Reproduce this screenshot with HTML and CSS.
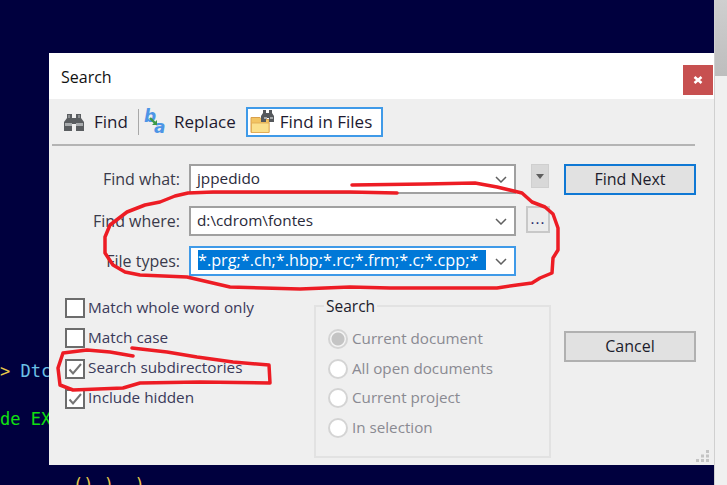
FILE: index.html
```html
<!DOCTYPE html>
<html lang="en">
<head>
<meta charset="utf-8">
<title>Search</title>
<link rel="stylesheet" href="styles.css">
</head>
<body>
<div class="desktop">
  <div class="code code-a"><span class="yl">&gt;</span> <span class="bl">Dtc</span></div>
  <div class="code code-b"><span class="gr">de EX</span></div>
  <div class="code code-c"><span class="yl">() )  )</span></div>
  <div class="scrollbar"><div class="thumb"></div></div>

  <section class="dialog">
    <header class="titlebar">
      <h1 class="title">Search</h1>
      <button class="close" aria-label="Close">
        <svg width="10" height="8" viewBox="0 0 10 8"><path d="M1.500 1 8.500 7M8.500 1 1.500 7" fill="none" stroke="#fff" stroke-width="2.600"/></svg>
      </button>
    </header>

    <nav class="toolbar">
      <div class="tool tool-find">
        <svg width="22" height="22" viewBox="0 0 22 22"><path d="M4 3h5v4h4V3h5v4l3 4v9h-8v-7H9v7H1v-9l3-4z" fill="#5a5d60"/><path d="M2 12h7v3H2zM13 12h7v3h-7z" fill="#a9acae"/><path d="M5 4h2v3H5zM15 4h2v3h-2z" fill="#8c8f91"/></svg>
        <span>Find</span>
      </div>
      <div class="sep"></div>
      <div class="tool tool-replace">
        <svg class="ico-rep" width="26" height="26" viewBox="0 0 26 26"><text x="1" y="13" class="ico-b">b</text><text x="11" y="24" class="ico-a">a</text><path d="M7 9l6 6" stroke="#3d9a46" stroke-width="2.400" fill="none"/><path d="M14 11v5H9z" fill="#3d9a46"/></svg>
        <span>Replace</span>
      </div>
      <div class="tool tool-files">
        <svg width="26" height="26" viewBox="0 0 26 26"><path d="M1 8.500h9l2 2h7v13H1z" fill="#f2c462" stroke="#d9a04c"/><path d="M1.500 14h17.500v9.500H1.500z" fill="#fbe08c" stroke="#dfa850" stroke-width=".8"/><path d="M13 1h3v3h3V1h3v3l2 3v6h-5V9h-3v4h-5V7l2-3z" fill="#55585c"/><path d="M14 8h3v2h-3zM20 8h3v2h-3z" fill="#a5a8aa"/></svg>
        <span>Find in Files</span>
      </div>
    </nav>

    <div class="content">
      <div class="fields">
        <label class="lbl"><span class="up">Find what:</span></label>
        <div class="combo"><span class="val up">jppedido</span><svg class="chev" width="12" height="7" viewBox="0 0 12 7"><path d="M1 1l5 5 5-5" fill="none" stroke="#606060" stroke-width="1.500"/></svg></div>
        <div class="extra"><div class="mini"><svg width="8" height="5" viewBox="0 0 8 5"><path d="M0 0h8L4 5z" fill="#5e5e5e"/></svg></div></div>
        <button class="btn btn-default"><span class="up-s">Find Next</span></button>

        <label class="lbl"><span class="up">Find where:</span></label>
        <div class="combo"><span class="val up">d:\cdrom\fontes</span><svg class="chev" width="12" height="7" viewBox="0 0 12 7"><path d="M1 1l5 5 5-5" fill="none" stroke="#606060" stroke-width="1.500"/></svg></div>
        <div class="extra"><div class="dots">...</div></div>
        <div></div>

        <label class="lbl"><span class="up">File types:</span></label>
        <div class="combo combo-focus"><span class="val-sel">*.prg;*.ch;*.hbp;*.rc;*.frm;*.c;*.cpp;*</span><svg class="chev" width="12" height="7" viewBox="0 0 12 7"><path d="M1 1l5 5 5-5" fill="none" stroke="#606060" stroke-width="1.500"/></svg></div>
      </div>

      <div class="lower">
        <div class="checks">
          <div class="check"><span class="box"></span><span class="up">Match whole word only</span></div>
          <div class="check"><span class="box"></span><span class="up">Match case</span></div>
          <div class="check"><span class="box"><svg width="16" height="16" viewBox="0 0 16 16"><path d="M2.500 8.500l3.500 4 8-9.500" fill="none" stroke="#757575" stroke-width="2"/></svg></span><span class="up">Search subdirectories</span></div>
          <div class="check"><span class="box"><svg width="16" height="16" viewBox="0 0 16 16"><path d="M2.500 8.500l3.500 4 8-9.500" fill="none" stroke="#757575" stroke-width="2"/></svg></span><span class="up">Include hidden</span></div>
        </div>
        <fieldset class="group">
          <legend class="legend">Search</legend>
          <div class="radio"><span class="dot dot-on"></span><span class="up-s">Current document</span></div>
          <div class="radio"><span class="dot"></span><span class="up-s">All open documents</span></div>
          <div class="radio"><span class="dot"></span><span class="up-s">Current project</span></div>
          <div class="radio"><span class="dot"></span><span class="up-s">In selection</span></div>
        </fieldset>
        <button class="btn btn-cancel"><span class="up-s">Cancel</span></button>
      </div>
    </div>

    <svg class="grip" width="14" height="14" viewBox="0 0 14 14"><path d="M10 1h3v3h-3zM5 5.500h3v3H5zM10 5.500h3v3h-3zM0 10h3v3H0zM5 10h3v3H5zM10 10h3v3h-3z" fill="#c4c4c4"/></svg>
  </section>

  <svg class="ink" width="727" height="485" viewBox="0 0 727 485">
    <path d="M352 185 425 184 475 183 497 187 522 193 532 202 545 207 553 214 558 228 558 250 553 258 552 273 540 278 532 283 517 285 497 288 390 288 350 287 300 289 230 287 187 277 140 275 125 272 113 265 105 253 105 237 110 225 127 212 145 205 160 202 175 196 188 193 213 192 350 192 397 193" />
    <path d="M133 356 110 352 87 350 63 353 58 368 60 385 73 390 123 388 140 383 200 382 270 383 269 365 233 362 197 357 167 352 132 348" />
  </svg>
</div>
</body>
</html>
```
FILE: styles.css
```css
* { box-sizing: border-box; }
html, body { margin: 0; padding: 0; }
body { font-family: "Open Sans", "Noto Sans", sans-serif; font-size: 16px; color: #1c1c2c; overflow: hidden; }
.desktop { position: relative; width: 727px; height: 485px; background: #00003e; overflow: hidden; }

.code { position: absolute; font-family: "DejaVu Sans Mono", monospace; font-size: 17px; line-height: 20px; white-space: pre; }
.code-a { left: 0; top: 361px; }
.code-b { left: 0; top: 409px; }
.code-c { left: 73px; top: 475px; }
.yl { color: #e6c84a; }
.bl { color: #6cc0e6; }
.gr { color: #10e010; }

.scrollbar { position: absolute; right: 0; top: 0; width: 13px; height: 485px; background: #f0f0f0; border-left: 1px solid #d0d0d0; }
.thumb { height: 76px; background: linear-gradient(#cfcfcf, #bdbdbd); }

.dialog { position: absolute; left: 49px; top: 53px; width: 665px; height: 412px; background: #efefef; display: flex; flex-direction: column; }
.titlebar { height: 46px; background: #fff; display: flex; justify-content: space-between; align-items: flex-start; flex: none; }
.title { margin: 12px 0 0 12px; font-size: 16px; font-weight: 400; line-height: 24px; color: #111; }
.close { margin: 12px 1px 0 0; width: 30px; height: 30px; border: 0; padding: 0; background: #c75050; display: flex; align-items: center; justify-content: center; }

.toolbar { height: 47px; flex: none; margin: 0 19px 0 3px; padding: 8px 0 0 11px; border-bottom: 2px solid #b4b4b4; display: flex; align-items: flex-start; font-size: 17px; color: #1e1a30; }
.tool { display: flex; align-items: center; height: 30px; }
.tool span { padding-bottom: 2px; }
.tool-find { gap: 9px; }
.tool-find span { margin-right: 10px; }
.sep { width: 1px; height: 26px; background: #a8a8a8; margin-top: 2px; }
.tool-replace { margin-left: 4px; gap: 5px; }
.tool-replace span { margin-right: 10px; }
.tool-files { width: 137px; flex: none; border: 2px solid #3f9ae8; background: #fff; padding-left: 2px; gap: 4px; }
.ico-rep { overflow: visible; }
.ico-b, .ico-a { font-family: "DejaVu Sans", sans-serif; font-weight: 700; font-style: italic; font-size: 17px; fill: #4d95e6; }

.content { padding: 18px 0 0 16px; display: flex; flex-direction: column; }
.fields { display: grid; grid-template-columns: 124px 327px 48px 132px; grid-template-rows: 42px 40px 30px; }
.lbl { width: 116px; padding-right: 1px; text-align: right; height: 30px; line-height: 30px; color: #3a3a4a; white-space: nowrap; }
.up { display: inline-block; line-height: 20px; padding-bottom: 3px; }
.up-s { display: inline-block; line-height: 20px; padding-bottom: 2px; }
.combo { width: 327px; height: 30px; border: 2px solid #a0a0a0; background: #fff; display: flex; align-items: center; justify-content: space-between; padding: 0 7px 0 6px; grid-column: 2; }
.val { white-space: nowrap; color: #2a2a3a; font-size: 15.300px; }
.combo-focus { border-color: #3f9ae8; padding-left: 7px; }
.val-sel { background: #0078d7; color: #fff; font-size: 16.200px; line-height: 20px; height: 20px; width: 288px; overflow: hidden; white-space: nowrap; display: block; margin-bottom: 3px; }
.chev { flex: none; }
.mini { width: 18px; height: 24px; margin-left: 15px; background: #d8d8d8; border: 1px solid #cfcfcf; display: flex; align-items: center; justify-content: center; }
.dots { width: 24px; height: 27px; margin-left: 10px; background: #ececec; border: 2px solid #c8c8c8; text-align: center; line-height: 21px; font-size: 15px; letter-spacing: 1px; color: #222266; }
.btn { font: inherit; color: #1c1c2c; width: 132px; height: 31px; background: #e1e1e1; padding: 0; }
.btn-default { border: 2px solid #0f78d4; }
.btn-cancel { border: 2px solid #b0b0b0; margin: 33px 0 0 13px; }

.lower { display: flex; align-items: flex-start; margin-top: 22px; }
.checks { width: 249px; display: flex; flex-direction: column; gap: 10.300px; }
.check { display: flex; align-items: center; height: 20px; gap: 3px; color: #3a3a5a; white-space: nowrap; font-size: 15.300px; }
.box { width: 20px; height: 20px; flex: none; border: 2px solid #6c6c6c; background: #fff; display: flex; align-items: center; justify-content: center; }

.group { width: 237px; height: 161px; margin: -1px 0 0; padding: 14px 0 0 12px; border: 2px solid #e2e2e2; min-width: 0; display: flex; flex-direction: column; gap: 9.700px; }
.legend { margin-left: -4px; padding: 0 2px; font-size: 15.500px; line-height: 18px; color: #1c1c2c; }
.radio { display: flex; align-items: center; height: 20px; gap: 4px; color: #8a8a92; white-space: nowrap; font-size: 15.200px; }
.dot { width: 20px; height: 20px; flex: none; border-radius: 50%; border: 2px solid #d4d4d4; background: #fff; display: flex; align-items: center; justify-content: center; }
.dot-on { background: radial-gradient(circle, #c4c4c4 0 6px, #f4f4f4 7px); }

.grip { position: absolute; right: 4px; bottom: 2px; }
.ink { position: absolute; left: 0; top: 0; pointer-events: none; }
.ink path { fill: none; stroke: #ed1c24; stroke-width: 3.500; stroke-linejoin: round; stroke-linecap: round; }
```
